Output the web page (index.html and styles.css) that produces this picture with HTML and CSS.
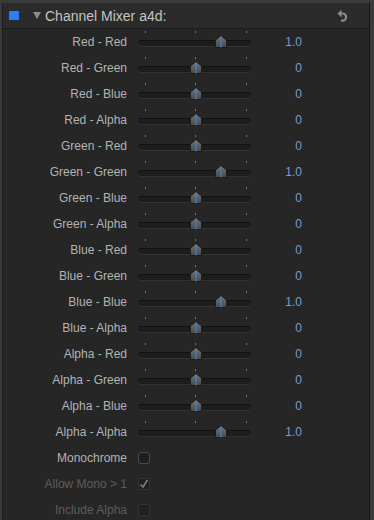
FILE: index.html
```html
<!DOCTYPE html>
<html lang="en">
<head>
    <meta charset="UTF-8">
    <meta name="viewport" content="width=device-width, initial-scale=1.0">
    <title>Channel Mixer</title>
    <link rel="stylesheet" href="styles.css">
</head>
<body>
    <div class="panel">
        <!-- Header -->
        <div class="header">
            <span class="enable-box"></span>
            <span class="disclosure"></span>
            <span class="title">Channel Mixer a4d:</span>
            <svg class="reset-icon" width="11" height="13" viewBox="0 0 11 13">
                <path d="M0.5 4.5 L4.5 0.5 L4.5 8.5 Z" fill="#8a8a8a"/>
                <path d="M4 4.5 H5.5 A3.6 3.6 0 0 1 5.5 11.7 H4" fill="none" stroke="#8a8a8a" stroke-width="2.2"/>
            </svg>
        </div>

        <!-- Mixer rows -->
        <div class="rows" id="rows"></div>

        <div class="row">
            <div class="label">Monochrome</div>
            <div class="check-cell"><span class="checkbox"></span></div>
        </div>
        <div class="row dim">
            <div class="label">Allow Mono &gt; 1</div>
            <div class="check-cell">
                <span class="checkbox">
                    <svg width="10" height="10" viewBox="0 0 10 10">
                        <polyline points="1.5,5.5 4,8 8.5,1" fill="none" stroke="#7c7c7c" stroke-width="1.6"/>
                    </svg>
                </span>
            </div>
        </div>
        <div class="row dim">
            <div class="label">Include Alpha</div>
            <div class="check-cell"><span class="checkbox"></span></div>
        </div>
    </div>

    <script>
        document.addEventListener('DOMContentLoaded', () => {
            const channels = ['Red', 'Green', 'Blue', 'Alpha'];
            const rows = document.getElementById('rows');

            channels.forEach(out => {
                channels.forEach(src => {
                    const value = out === src ? 1 : 0;
                    const row = document.createElement('div');
                    row.className = 'row';
                    row.innerHTML =
                        '<div class="label">' + out + ' - ' + src + '</div>' +
                        '<div class="slider">' +
                            '<span class="tick t1"></span><span class="tick t2"></span><span class="tick t3"></span>' +
                            '<span class="track"></span>' +
                            '<svg class="knob ' + (value ? 'one' : 'zero') + '" width="12" height="13" viewBox="0 0 12 13">' +
                                '<defs><linearGradient id="g" x1="0" y1="0" x2="0" y2="1">' +
                                '<stop offset="0" stop-color="#747474"/><stop offset="1" stop-color="#4a4a4a"/>' +
                                '</linearGradient></defs>' +
                                '<polygon points="0.5,5 6,0.5 11.5,5 11.5,12.5 0.5,12.5" fill="url(#g)" stroke="#1c1c1c"/>' +
                                '<line x1="6" y1="2" x2="6" y2="12.5" stroke="#2f8cf0" stroke-width="1"/>' +
                            '</svg>' +
                        '</div>' +
                        '<div class="value">' + (value ? '1.0' : '0') + '</div>';
                    rows.appendChild(row);
                });
            });
        });
    </script>
</body>
</html>
```

FILE: styles.css
```css
body {
    margin: 0;
    background-color: #3a3a3a;
    font-family: "Liberation Sans", Arial, sans-serif;
    overflow: hidden;
}
.panel {
    margin: 3px 0 0 2px;
    width: 366px;
    height: 520px;
    background-color: #262626;
    border-left: 1px solid #1c1c1c;
    border-right: 1px solid #171717;
}
.header {
    display: flex;
    align-items: center;
    height: 25px;
    padding-left: 6px;
    background-color: #2b2b2b;
    border-bottom: 1px solid #1a1a1a;
}
.enable-box {
    width: 10px;
    height: 9px;
    background-color: #2a80f8;
    border-radius: 1px;
}
.disclosure {
    width: 0;
    height: 0;
    margin-left: 14px;
    border-left: 4px solid transparent;
    border-right: 4px solid transparent;
    border-top: 7px solid #8c8c8c;
}
.title {
    margin-left: 4px;
    font-size: 14px;
    color: #c4c4c4;
    flex: 1;
}
.reset-icon {
    margin-right: 21px;
}
.row {
    display: flex;
    align-items: center;
    height: 26px;
}
.label {
    width: 124px;
    text-align: right;
    font-size: 12px;
    color: #b3b3b3;
    margin-top: -1px;
}
.slider {
    position: relative;
    width: 113px;
    height: 26px;
    margin-left: 11px;
}
.tick {
    position: absolute;
    top: 2px;
    width: 1px;
    height: 2px;
    background-color: #7a7a7a;
}
.t1 { left: 7px; }
.t2 { left: 57px; }
.t3 { left: 108px; }
.track {
    position: absolute;
    top: 11px;
    left: 0;
    width: 113px;
    height: 6px;
    box-sizing: border-box;
    border-radius: 3px;
    background-color: #1d1d1d;
    border-top: 1px solid #111111;
    box-shadow: 0 1px 0 #323232;
}
.knob {
    position: absolute;
    top: 6px;
}
.knob.zero { left: 52px; }
.knob.one { left: 77px; }
.value {
    width: 51px;
    text-align: right;
    font-size: 12px;
    color: #7b9bd3;
    margin-top: -1px;
}
.check-cell {
    margin-left: 11px;
    display: flex;
    align-items: center;
}
.checkbox {
    display: flex;
    align-items: center;
    justify-content: center;
    width: 12px;
    height: 12px;
    box-sizing: border-box;
    border: 1px solid #474a55;
    border-radius: 2px;
    background-color: #1f1f1f;
}
.dim .label {
    color: #5c5c5c;
}
.dim .checkbox {
    border-color: #343434;
}
```
